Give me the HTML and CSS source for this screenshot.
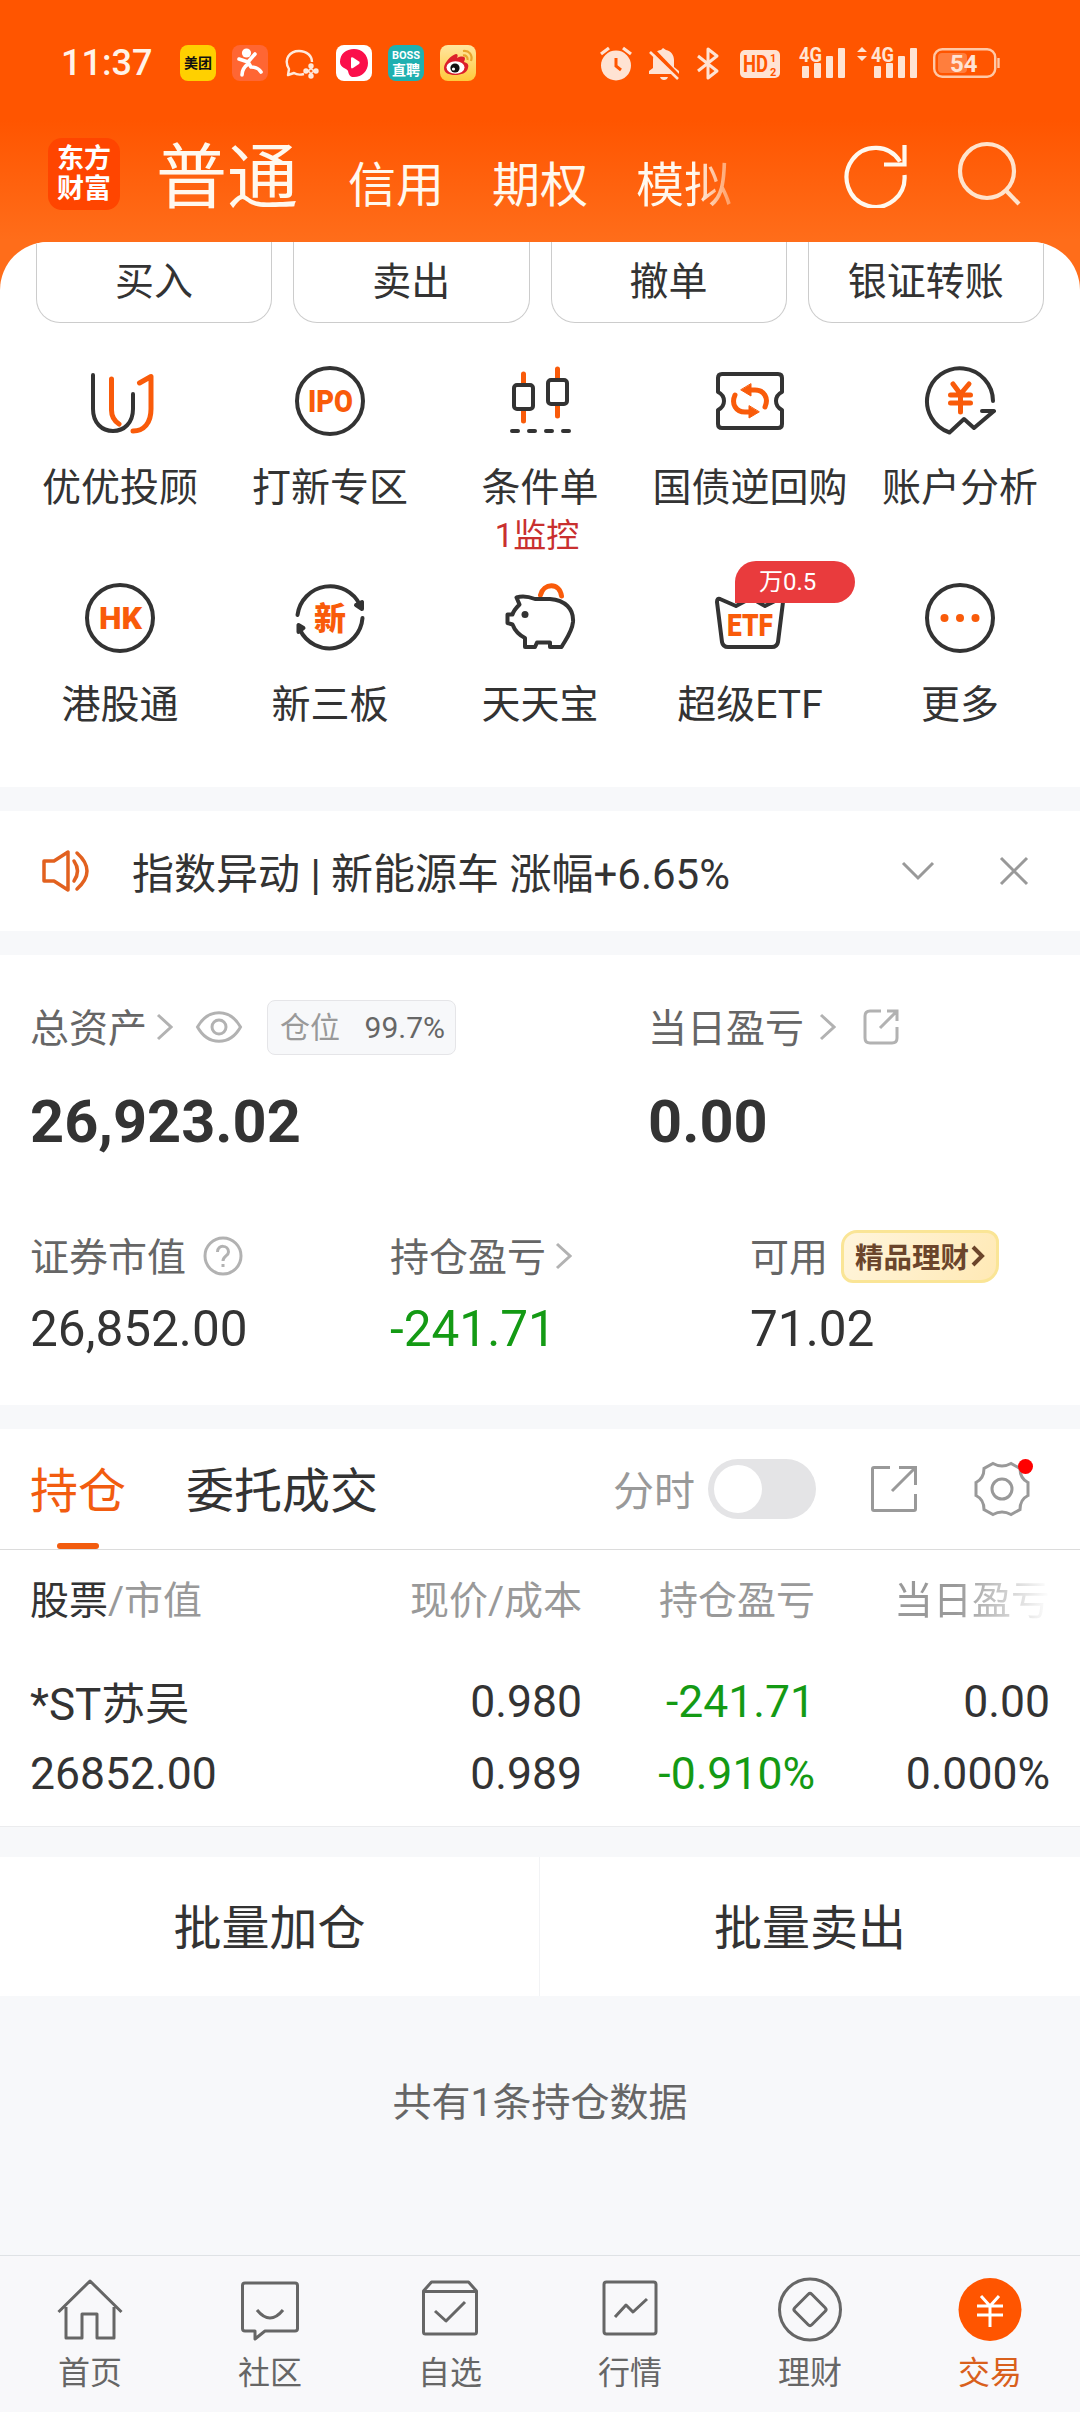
FILE: index.html
```
<!DOCTYPE html>
<html lang="zh-CN">

<head>
    <meta charset="UTF-8">
    <meta name="viewport" content="width=device-width, initial-scale=1.0">
    <title>东方财富 - 交易</title>
    <link rel="stylesheet" href="styles.css">
</head>

<body>
    <header class="header">
        <div class="status-bar">
            <span class="time">11:37</span>
            <div class="app-icons">
                <span class="app-icon meituan">美团</span>
                <span class="app-icon runner">
                    <svg width="36" height="36" viewBox="0 0 36 36" fill="none" stroke="#fff" stroke-width="3.6" stroke-linecap="round" stroke-linejoin="round">
                        <circle cx="14.500" cy="8" r="4.600" fill="#fff" stroke="none" />
                        <path d="M7 14l9 3 7-8M16 17l3 5q7 0 10 5M16 19c-4 3-6 6-6 11" />
                    </svg>
                </span>
                <span class="app-icon">
                    <svg width="36" height="36" viewBox="0 0 36 36" fill="none" stroke="#ffe9dc" stroke-width="2.400" stroke-linejoin="round">
                        <path d="M20 29c-4 1-7 1-10-1l-6 2 1-6C-1 14 6 6 15 6c8 0 13 5 13 11" />
                        <circle cx="27" cy="21" r="1.500" /><circle cx="32" cy="26" r="1.500" />
                        <circle cx="27" cy="31" r="1.500" /><circle cx="22" cy="26" r="1.500" />
                        <path d="M27 21c0 3 2 5 5 5-3 0-5 2-5 5 0-3-2-5-5-5 3 0 5-2 5-5" stroke-width="1.500" />
                    </svg>
                </span>
                <span class="app-icon white">
                    <svg width="36" height="36" viewBox="0 0 36 36">
                        <path d="M4 17C4 9 10 4 18 4s14 6 14 14-6 14-14 14c-4 0-5-2-6-6-1-3-8-3-8-9z" fill="#fb0f4b" />
                        <path d="M15 13.500q0-2 2-1l6 4q1.500 1.300 0 2.600l-6 4q-2 1-2-1z" fill="#fff" />
                    </svg>
                </span>
                <span class="app-icon boss"><small>BOSS</small>直聘</span>
                <span class="app-icon weibo">
                    <svg width="36" height="36" viewBox="0 0 36 36">
                        <path d="M4 23c0-5 7-13 12-14 2 0 2 2 1 4 4-2 8-2 8 1l-1 3c4 1 5 3 4 6-1 5-7 7-13 7S4 28 4 23z" fill="#dc1f2b" />
                        <ellipse cx="15.500" cy="22.500" rx="9" ry="6.200" fill="#fff" />
                        <circle cx="15" cy="23" r="4.600" fill="#111" />
                        <circle cx="13.500" cy="24" r="1.600" fill="#fff" />
                        <path d="M23 6c6-1 10 4 8 10M23 10.500c3-.5 5 1.500 4.500 4.500" fill="none" stroke="#e9a52e" stroke-width="2.200" />
                    </svg>
                </span>
            </div>
            <svg class="system-icons" width="402" height="52" viewBox="0 -8 402 52" fill="none" stroke="#ffe3d3">
                <!-- 闹钟 -->
                <circle cx="17" cy="20.500" r="15" fill="#ffe3d3" stroke="none" />
                <path d="M2 9l8-6M32 9l-8-6" stroke-width="3.200" />
                <path d="M17 13v8l5 4" stroke="#ff5500" stroke-width="3" />
                <!-- 静音 -->
                <path d="M50 29v-3l4-3v-8c0-6 4-10 8-10l2-2 3 2c5 1 8 5 8 10v7l5 4v3z" fill="#ffe3d3" stroke="none" />
                <path d="M61 32h8q-1 3-4 3t-4-3z" fill="#ffe3d3" stroke="none" />
                <path d="M53 4l28 29" stroke="#ff5500" stroke-width="4" />
                <path d="M51 7l28 27" stroke-width="2.600" />
                <!-- 蓝牙 -->
                <path d="M99 11l19 15-9 7V4l9 7-19 15" stroke-width="3" stroke-linejoin="round" />
                <rect x="141" y="5" width="40" height="28" rx="5" fill="#ffe3d3" stroke="none" />
                <g fill="#ff5500" stroke="none" class="status-text">
                    <text x="144" y="27" font-size="23" textLength="25" lengthAdjust="spacingAndGlyphs">HD</text>
                    <text x="171" y="17" font-size="11">1</text>
                    <text x="171" y="31" font-size="11">2</text>
                </g>
                <!-- 信号 -->
                <g fill="#ffe3d3" stroke="none" class="status-text">
                    <text x="200" y="17" font-size="20" textLength="23" lengthAdjust="spacingAndGlyphs">4G</text>
                    <rect x="203" y="21" width="7" height="12" rx="1" />
                    <rect x="215" y="18" width="7" height="15" rx="1" />
                    <rect x="227" y="11" width="7" height="22" rx="1" />
                    <rect x="239" y="3" width="7" height="30" rx="1" />
                    <path d="M258 7l5-5 5 5zM258 11l5 5 5-5z" />
                    <text x="272" y="17" font-size="20" textLength="23" lengthAdjust="spacingAndGlyphs">4G</text>
                    <rect x="275" y="21" width="7" height="12" rx="1" />
                    <rect x="287" y="18" width="7" height="15" rx="1" />
                    <rect x="299" y="11" width="7" height="22" rx="1" />
                    <rect x="311" y="3" width="7" height="30" rx="1" />
                </g>
                <!-- 电量 -->
                <rect x="335.200" y="4.200" width="61" height="27.600" rx="8" stroke="#ffc8a6" stroke-width="2.400" />
                <rect x="339" y="8" width="29" height="20" rx="4" fill="#ff7e3d" stroke="none" />
                <path d="M399.500 13v10" stroke="#ffc8a6" stroke-width="2.400" />
                <text class="status-text" x="351" y="26.500" font-size="24" fill="#ffe3d3" stroke="none">54</text>
            </svg>
        </div>
        <div class="title-bar">
            <div class="logo">东方<br>财富</div>
            <nav class="account-tabs">
                <a class="active">普通</a>
                <a>信用</a>
                <a>期权</a>
                <a class="fade">模拟</a>
            </nav>
            <svg class="refresh" width="64" height="66" viewBox="0 0 64 66" fill="none" stroke="#fff8ee" stroke-width="4.200">
                <path d="M60.500 33A29 29.500 0 1 1 56 19.500" />
                <path d="M60.500 3v19.500H40" />
            </svg>
            <svg width="64" height="66" viewBox="0 0 64 66" fill="none" stroke="#ffe3cc" stroke-width="4.200">
                <circle cx="30" cy="30" r="27" />
                <path d="M48.500 49L62 63" />
            </svg>
        </div>
    </header>

    <main>
        <section class="card shortcuts">
            <div class="actions">
                <button>买入</button>
                <button>卖出</button>
                <button>撤单</button>
                <button>银证转账</button>
            </div>
            <div class="grid">
                <div class="item">
                    <svg width="72" height="72" viewBox="0 0 72 72">
                        <path d="M9 10v34c0 14 9 22 20 22s20-8 20-22V29" />
                        <path class="o" d="M27.500 14v31q0 9 7.500 14M55.500 18L67 11.500V44c0 14-7 22-18 22" />
                    </svg>
                    <span>优优投顾</span>
                </div>
                <div class="item">
                    <svg width="72" height="72" viewBox="0 0 72 72">
                        <circle cx="36" cy="36" r="33" />
                        <text x="14" y="47" font-size="31" textLength="45" lengthAdjust="spacingAndGlyphs">IPO</text>
                    </svg>
                    <span>打新专区</span>
                </div>
                <div class="item">
                    <svg width="72" height="72" viewBox="0 0 72 72">
                        <path class="o" d="M19.500 9v47M53.500 4v47" />
                        <rect x="10" y="20" width="19" height="24" rx="3" fill="#fff" />
                        <rect x="44" y="15" width="19" height="24" rx="3" fill="#fff" />
                        <path d="M8 66h6M25 66h6M42 66h6M59 66h6" />
                    </svg>
                    <span>条件单</span>
                    <em>1监控</em>
                </div>
                <div class="item">
                    <svg width="72" height="72" viewBox="0 0 72 72">
                        <path d="M8 9h56q4 0 4 4v14c-8 4-8 14 0 18v14q0 4-4 4H8q-4 0-4-4V45c8-4 8-14 0-18V13q0-4 4-4z" />
                        <path class="o" d="M21 30c-4 9 1 17 10 17h7M51 42c4-9-1-17-10-17h-7" />
                        <path d="M37 19v12l-10-6zM35 41v12l10-6z" fill="#f95b0a" stroke="#f95b0a" stroke-width="1" />
                    </svg>
                    <span>国债逆回购</span>
                </div>
                <div class="item">
                    <svg width="72" height="72" viewBox="0 0 72 72">
                        <path d="M69 36A33 33 0 1 0 25.500 67.500L40 54l10 9 20-17H58" />
                        <path class="o" d="M29 19l7.500 10L45 19M36.500 30v17M26.500 30h20M26.500 38h20" />
                    </svg>
                    <span>账户分析</span>
                </div>
                <div class="item">
                    <svg width="72" height="72" viewBox="0 0 72 72">
                        <circle cx="36" cy="36" r="33" />
                        <text x="15" y="47" font-size="31" textLength="43" lengthAdjust="spacingAndGlyphs">HK</text>
                    </svg>
                    <span>港股通</span>
                </div>
                <div class="item">
                    <svg width="72" height="72" viewBox="0 0 72 72">
                        <path d="M3.500 33A33 33 0 0 1 66 23M68.500 36A33 33 0 0 1 6 48" />
                        <path d="M62 23l6-3v7zM9.500 46l-5-3v7z" fill="#333" />
                        <text x="20" y="48" font-size="32">新</text>
                    </svg>
                    <span>新三板</span>
                </div>
                <div class="item">
                    <svg width="72" height="72" viewBox="0 0 72 72">
                        <path class="o" d="M36.500 13c3-12 19-13 21 1" />
                        <path d="M12.500 15.500c6-2 12-1 18.500 1.500h15c15 1 24 10 23 23-1 10-7 17-11.500 25H46v-4.500H33L31 65H21v-9C15 53 11 49 8.500 42.500l-5-1.500v-8.500h5c1-4 4-7 7-10z" />
                        <circle cx="21" cy="32.500" r="3.500" fill="#333" stroke="none" />
                    </svg>
                    <span>天天宝</span>
                </div>
                <div class="item">
                    <svg width="72" height="72" viewBox="0 0 72 72">
                        <path d="M22 24L6 17q-3-1-3 3l5 40q1 5 6 5h44q5 0 6-5l5-40q0-4-4-3L51 24l-14-8z" />
                        <text x="13" y="54" font-size="32" textLength="46" lengthAdjust="spacingAndGlyphs">ETF</text>
                    </svg>
                    <span>超级ETF</span>
                    <b class="badge">万0.5</b>
                </div>
                <div class="item">
                    <svg width="72" height="72" viewBox="0 0 72 72">
                        <circle cx="36" cy="36" r="33" />
                        <g fill="#f95b0a" stroke="none">
                            <circle cx="20.500" cy="36" r="4" />
                            <circle cx="36" cy="36" r="4" />
                            <circle cx="51.500" cy="36" r="4" />
                        </g>
                    </svg>
                    <span>更多</span>
                </div>
            </div>
        </section>

        <section class="card news">
            <svg width="48" height="44" viewBox="0 0 48 44" fill="none" stroke="#e2611f" stroke-width="3.500" stroke-linejoin="round" stroke-linecap="round">
                <path d="M2 12h10L26 3v38L12 32H2zM32 12q7 10 0 20M35 4q20 18 0 36" />
            </svg>
            <p>指数异动 | 新能源车 涨幅+6.65%</p>
            <svg class="down" width="34" height="20" viewBox="0 0 34 20" fill="none" stroke="#999" stroke-width="3">
                <path d="M2 2l15 15L32 2" />
            </svg>
            <svg width="30" height="30" viewBox="0 0 30 30" fill="none" stroke="#999" stroke-width="3">
                <path d="M2 2l26 26M28 2L2 28" />
            </svg>
        </section>

        <section class="card assets">
            <div class="totals">
                <div class="total">
                    <div class="label">
                        <span>总资产</span>
                        <svg class="chevron" width="17" height="28" viewBox="0 0 17 28"><path d="M2 2l13 12L2 26" /></svg>
                        <svg class="eye" width="48" height="34" viewBox="0 0 48 34">
                            <path d="M2.500 17C13-2 35-2 45.500 17 35 36 13 36 2.500 17z" />
                            <circle cx="24" cy="17" r="7" />
                        </svg>
                        <div class="position"><span>仓位</span> <b>99.7%</b></div>
                    </div>
                    <strong>26,923.02</strong>
                </div>
                <div class="total">
                    <div class="label">
                        <span>当日盈亏</span>
                        <svg class="chevron wide" width="17" height="28" viewBox="0 0 17 28"><path d="M2 2l13 12L2 26" /></svg>
                        <svg class="share" width="36" height="36" viewBox="0 0 36 36">
                            <path d="M18 2H7Q2 2 2 7v22q0 5 5 5h22q5 0 5-5V18M17 19L33 3M24 2h10v10" />
                        </svg>
                    </div>
                    <strong>0.00</strong>
                </div>
            </div>
            <div class="details">
                <div class="detail">
                    <div class="label">
                        <span>证券市值</span>
                        <svg class="help" width="40" height="40" viewBox="0 0 40 40">
                            <circle cx="20" cy="20" r="18" />
                            <path d="M14.500 16c0-8 11-7 11 0 0 4-5.500 4-5.500 9M20 28v3" />
                        </svg>
                    </div>
                    <p>26,852.00</p>
                </div>
                <div class="detail">
                    <div class="label">
                        <span>持仓盈亏</span>
                        <svg class="chevron" width="17" height="28" viewBox="0 0 17 28"><path d="M2 2l13 12L2 26" /></svg>
                    </div>
                    <p class="green">-241.71</p>
                </div>
                <div class="detail">
                    <div class="label">
                        <span>可用</span>
                        <div class="promo"><span>精品理财</span><svg width="14" height="22" viewBox="0 0 14 22"><path d="M2 2l9 9-9 9" /></svg></div>
                    </div>
                    <p>71.02</p>
                </div>
            </div>
        </section>

        <section class="card holdings">
            <div class="tabs">
                <a class="active">持仓</a>
                <a>委托成交</a>
                <span class="toggle-label">分时</span>
                <i class="toggle"></i>
                <svg class="export" width="48" height="48" viewBox="0 0 48 48">
                    <path d="M20 2.500H4q-1.500 0-1.500 1.500v40q0 1.500 1.500 1.500h40q1.500 0 1.500-1.500V29M29 2.500h16.500V20M22 26L45 3" />
                </svg>
                <div class="settings">
                    <svg width="56" height="56" viewBox="0 0 56 56">
                        <path d="M19 2.500q9 5 18 0l9 5q0 10 8 14v13q-8 4-8 14l-9 5q-9-5-18 0l-9-5q0-10-8-14v-13q8-4 8-14z" />
                        <circle cx="28" cy="28" r="10" />
                    </svg>
                </div>
            </div>
            <div class="row head">
                <span><b>股票</b>/市值</span>
                <span>现价/成本</span>
                <span>持仓盈亏</span>
                <span class="fade">当日盈亏</span>
            </div>
            <div class="row">
                <span class="stock">*ST苏吴</span>
                <span>0.980</span>
                <span class="green">-241.71</span>
                <span>0.00</span>
            </div>
            <div class="row">
                <span>26852.00</span>
                <span>0.989</span>
                <span class="green">-0.910%</span>
                <span>0.000%</span>
            </div>
        </section>

        <div class="batch">
            <button>批量加仓</button>
            <button>批量卖出</button>
        </div>

        <p class="summary">共有1条持仓数据</p>
    </main>

    <nav class="bottom-nav">
        <a>
            <svg width="66" height="66" viewBox="0 0 66 66">
                <path d="M1.500 35L33 4l31.500 31M9 30v31h16V37h15v24h17V30" />
            </svg>
            首页
        </a>
        <a>
            <svg width="66" height="66" viewBox="0 0 66 66">
                <path d="M8 6h50q2.500 0 2.500 2.500v43Q60.500 54 58 54H28l-10 8v-8H8q-2.500 0-2.500-2.500v-43Q5.500 6 8 6zM20 33q13 16 26 0" />
            </svg>
            社区
        </a>
        <a>
            <svg width="66" height="66" viewBox="0 0 66 66">
                <path d="M6.500 14l8-9h37l8 9v41q0 2-2 2h-49q-2 0-2-2zM6.500 14.500h53M18 34l11 10 19-19" />
            </svg>
            自选
        </a>
        <a>
            <svg width="66" height="66" viewBox="0 0 66 66">
                <rect x="7" y="5" width="52" height="52" rx="2.500" />
                <path d="M18 40l11-12 7 7 14-13" />
            </svg>
            行情
        </a>
        <a>
            <svg width="66" height="66" viewBox="0 0 66 66">
                <circle cx="33" cy="32.500" r="30.500" />
                <rect x="21" y="20.500" width="24" height="24" rx="2.500" transform="rotate(45 33 32.500)" />
            </svg>
            理财
        </a>
        <a class="active">
            <svg width="66" height="66" viewBox="0 0 66 66">
                <circle cx="33" cy="32.500" r="31.500" />
                <path d="M24 19l9 10 9-10M33 29v21M20 29h26M20 38h26" />
            </svg>
            交易
        </a>
    </nav>
</body>

</html>
```
FILE: styles.css
```
* {
    box-sizing: border-box;
}

body {
    width: 1080px;
    height: 2412px;
    margin: 0;
    display: flex;
    flex-direction: column;
    overflow: hidden;
    font-family: Roboto, "Noto Sans CJK SC", sans-serif;
    font-size: 39px;
    font-weight: 400;
    color: #333;
    background-color: #f7f8fa;
}

p {
    margin: 0;
}

svg {
    display: block;
    flex: none;
}

button {
    padding: 0;
    border: none;
    font: inherit;
    color: inherit;
    background-color: #fff;
}

/* 顶部 */
.header {
    height: 300px;
    background: linear-gradient(#ff5500 0, #ff5500 120px, #ff6d1a 240px);
}

.status-bar {
    height: 120px;
    padding: 6px 79px 0 61px;
    display: flex;
    align-items: center;
}

.time {
    width: 119px;
    font-size: 36px;
    font-weight: 500;
    color: #fff3e8;
}

.app-icons {
    display: flex;
    gap: 16px;
}

.app-icon {
    width: 36px;
    height: 36px;
    border-radius: 8px;
    overflow: hidden;
    display: flex;
    flex-direction: column;
    align-items: center;
    justify-content: center;
    font-size: 14px;
    line-height: 16px;
    font-weight: 700;
    white-space: nowrap;
}

.meituan {
    color: #111;
    background-color: #ffd000;
}

.runner {
    background-color: #ff6633;
}

.white {
    background-color: #fff;
}

.boss {
    color: #fff;
    background-color: #1fb0b0;
}

.boss small {
    font-size: 11px;
    line-height: 13px;
}

.weibo {
    background: linear-gradient(#ffe6a0, #ffc93c);
}

.system-icons {
    margin-left: auto;
}

.status-text {
    font-weight: 700;
}

.title-bar {
    height: 122px;
    padding-left: 48px;
    display: flex;
}

.logo {
    width: 72px;
    height: 72px;
    margin-top: 18px;
    padding-top: 6px;
    border-radius: 14px;
    font-size: 27px;
    line-height: 30px;
    font-weight: 700;
    text-align: center;
    color: #fff;
    background-color: #ff4500;
}

.account-tabs {
    width: 724px;
    margin-left: 36px;
    padding-top: 5px;
    display: flex;
    align-items: baseline;
    gap: 48px;
    font-size: 48px;
    line-height: 106px;
    color: #fff8ee;
}

.account-tabs .active {
    font-size: 71px;
    width: 144px;
}

.account-tabs .fade {
    color: transparent;
    background: linear-gradient(90deg, #fff8ee 60%, #ff9a60 100%);
    -webkit-background-clip: text;
    background-clip: text;
}

.title-bar svg {
    margin-top: 21px;
}

.title-bar .refresh {
    margin: 22px 49px 0 -36px;
}

/* 内容 */
main {
    flex: 1;
    margin-top: -58px;
}

.card {
    margin-bottom: 24px;
    background-color: #fff;
}

.shortcuts {
    height: 545px;
    border-radius: 48px 48px 0 0;
    overflow: hidden;
}

.actions {
    padding: 0 36px;
    display: grid;
    grid-template-columns: repeat(4, 1fr);
    gap: 21px;
}

.actions button {
    height: 81px;
    padding-bottom: 8px;
    border: 1px solid #ccc;
    border-top: none;
    border-radius: 0 0 24px 24px;
}

.grid {
    padding: 42px 15px 0;
    display: grid;
    grid-template-columns: repeat(5, 210px);
    grid-auto-rows: 217px;
}

.item {
    position: relative;
    display: flex;
    flex-direction: column;
    align-items: center;
}

.item svg {
    fill: none;
    stroke: #333;
    stroke-width: 4;
    stroke-linecap: round;
    stroke-linejoin: round;
}

.item svg .o {
    stroke: #f95b0a;
    stroke-width: 5;
}

.item text {
    fill: #f95b0a;
    stroke: none;
    font-weight: 900;
}

.item span {
    margin-top: 26px;
    line-height: 50px;
}

.item em {
    margin-left: -6px;
    font-size: 33px;
    line-height: 46px;
    font-style: normal;
    color: #c9302f;
}

.badge {
    position: absolute;
    top: -21px;
    left: 90px;
    width: 120px;
    height: 42px;
    padding-left: 24px;
    border-radius: 21px 21px 21px 0;
    font-size: 24px;
    line-height: 42px;
    font-weight: 400;
    color: #fff;
    background-color: #e93b3d;
}

.news {
    height: 120px;
    padding: 0 51px 0 42px;
    display: flex;
    align-items: center;
}

.news p {
    margin: 0 0 2px 42px;
    font-size: 42px;
}

.news .down {
    margin: 0 64px 0 auto;
}

.assets {
    height: 450px;
    padding: 42px 30px 0;
}

.totals {
    display: grid;
    grid-template-columns: 618px 1fr;
}

.details {
    margin-top: 68px;
    display: grid;
    grid-template-columns: 360px 360px 1fr;
}

.label {
    height: 60px;
    display: flex;
    align-items: center;
    color: #666;
}

.label span {
    margin-bottom: 4px;
}

.label svg {
    fill: none;
    stroke: #b2b2b2;
    stroke-width: 3;
}

.total strong {
    display: block;
    margin-top: 29px;
    font-size: 59.500px;
    line-height: 72px;
    font-weight: 700;
}

.detail p {
    margin-top: 14px;
    font-size: 49.500px;
    line-height: 58px;
}

.chevron {
    margin-left: 9px;
}

.chevron.wide {
    margin-left: 15px;
}

.eye {
    margin-left: 22px;
}

.share {
    margin-left: 27px;
}

.help {
    margin-left: 17px;
}

.position {
    width: 189px;
    height: 55px;
    margin-left: 24px;
    padding: 0 10px 0 12px;
    display: flex;
    align-items: center;
    justify-content: space-between;
    border: 1px solid #e5e5e8;
    border-radius: 8px;
    font-size: 30px;
    color: #999;
    background-color: #f7f8fa;
}

.position b {
    font-weight: 400;
    color: #666;
}

.promo {
    width: 158px;
    height: 53px;
    margin-left: 13px;
    padding-left: 11px;
    display: flex;
    align-items: center;
    border: 3px solid #fae596;
    border-radius: 16px 12px 18px 12px;
    font-size: 28.500px;
    font-weight: 700;
    color: #6b452b;
    background: linear-gradient(120deg, #fff5dc, #ffe9b5);
}

.promo span {
    margin-bottom: 2px;
}

.label .promo svg {
    margin-left: 2px;
    stroke: #6b452b;
    stroke-width: 4;
}

.green {
    color: #149a14;
}

/* 持仓 */
.holdings {
    height: 398px;
    margin-bottom: 30px;
    border-bottom: 1px solid #ebecee;
}

.tabs {
    height: 121px;
    padding: 0 50px 0 30px;
    display: flex;
    align-items: center;
    border-bottom: 1px solid #dcdcdc;
    font-size: 48px;
}

.tabs a {
    position: relative;
    margin: 0 60px 4px 0;
}

.tabs .active {
    color: #f25c0f;
}

.tabs .active::after {
    content: "";
    position: absolute;
    left: 27px;
    bottom: -27px;
    width: 42px;
    height: 6px;
    border-radius: 3px;
    background-color: #f25c0f;
}

.toggle-label {
    margin: 0 0 2px auto;
    font-size: 41px;
    color: #999;
}

.toggle {
    width: 108px;
    height: 60px;
    margin: 0 54px 0 13px;
    padding: 6px;
    border-radius: 30px;
    background-color: #e4e4e6;
}

.toggle::before {
    content: "";
    display: block;
    width: 48px;
    height: 48px;
    border-radius: 50%;
    background-color: #fff;
}

.tabs svg {
    fill: none;
    stroke: #999;
    stroke-width: 3;
}

.settings {
    position: relative;
    margin-left: 56px;
}

.settings::after {
    content: "";
    position: absolute;
    top: -2px;
    right: -3px;
    width: 15px;
    height: 15px;
    border-radius: 50%;
    background-color: #f00;
}

.row {
    height: 72px;
    padding: 0 30px;
    display: grid;
    grid-template-columns: 300px 252px 233px 235px;
    align-items: center;
    font-size: 44.500px;
}

.row span:not(:first-child) {
    text-align: right;
}

.row .stock {
    margin-bottom: 3px;
    font-size: 44px;
}

.row.head {
    height: 94px;
    margin-bottom: 22px;
    font-size: 39px;
    color: #999;
}

.head b {
    font-weight: 400;
    color: #333;
}

.head .fade {
    color: transparent;
    background: linear-gradient(90deg, #999 60%, #fff 100%);
    -webkit-background-clip: text;
    background-clip: text;
}

.batch {
    height: 139px;
    display: grid;
    grid-template-columns: 539px 541px;
    font-size: 48px;
}

.batch button {
    padding-bottom: 5px;
}

.batch button + button {
    border-left: 1px solid #f2f3f5;
}

.summary {
    margin-top: 75px;
    text-align: center;
    color: #666;
}

/* 底部导航 */
.bottom-nav {
    height: 157px;
    padding-top: 21px;
    display: grid;
    grid-template-columns: repeat(6, 1fr);
    border-top: 1px solid #dfe2e5;
    background-color: #f8f8fa;
}

.bottom-nav a {
    display: flex;
    flex-direction: column;
    align-items: center;
    font-size: 32px;
    line-height: 60px;
    color: #666;
}

.bottom-nav svg {
    fill: none;
    stroke: #666;
    stroke-width: 3;
    stroke-linejoin: round;
}

.bottom-nav .active {
    color: #d9601c;
}

.active circle {
    fill: #ff5500;
    stroke: none;
}

.active path {
    stroke: #fff;
}
```
